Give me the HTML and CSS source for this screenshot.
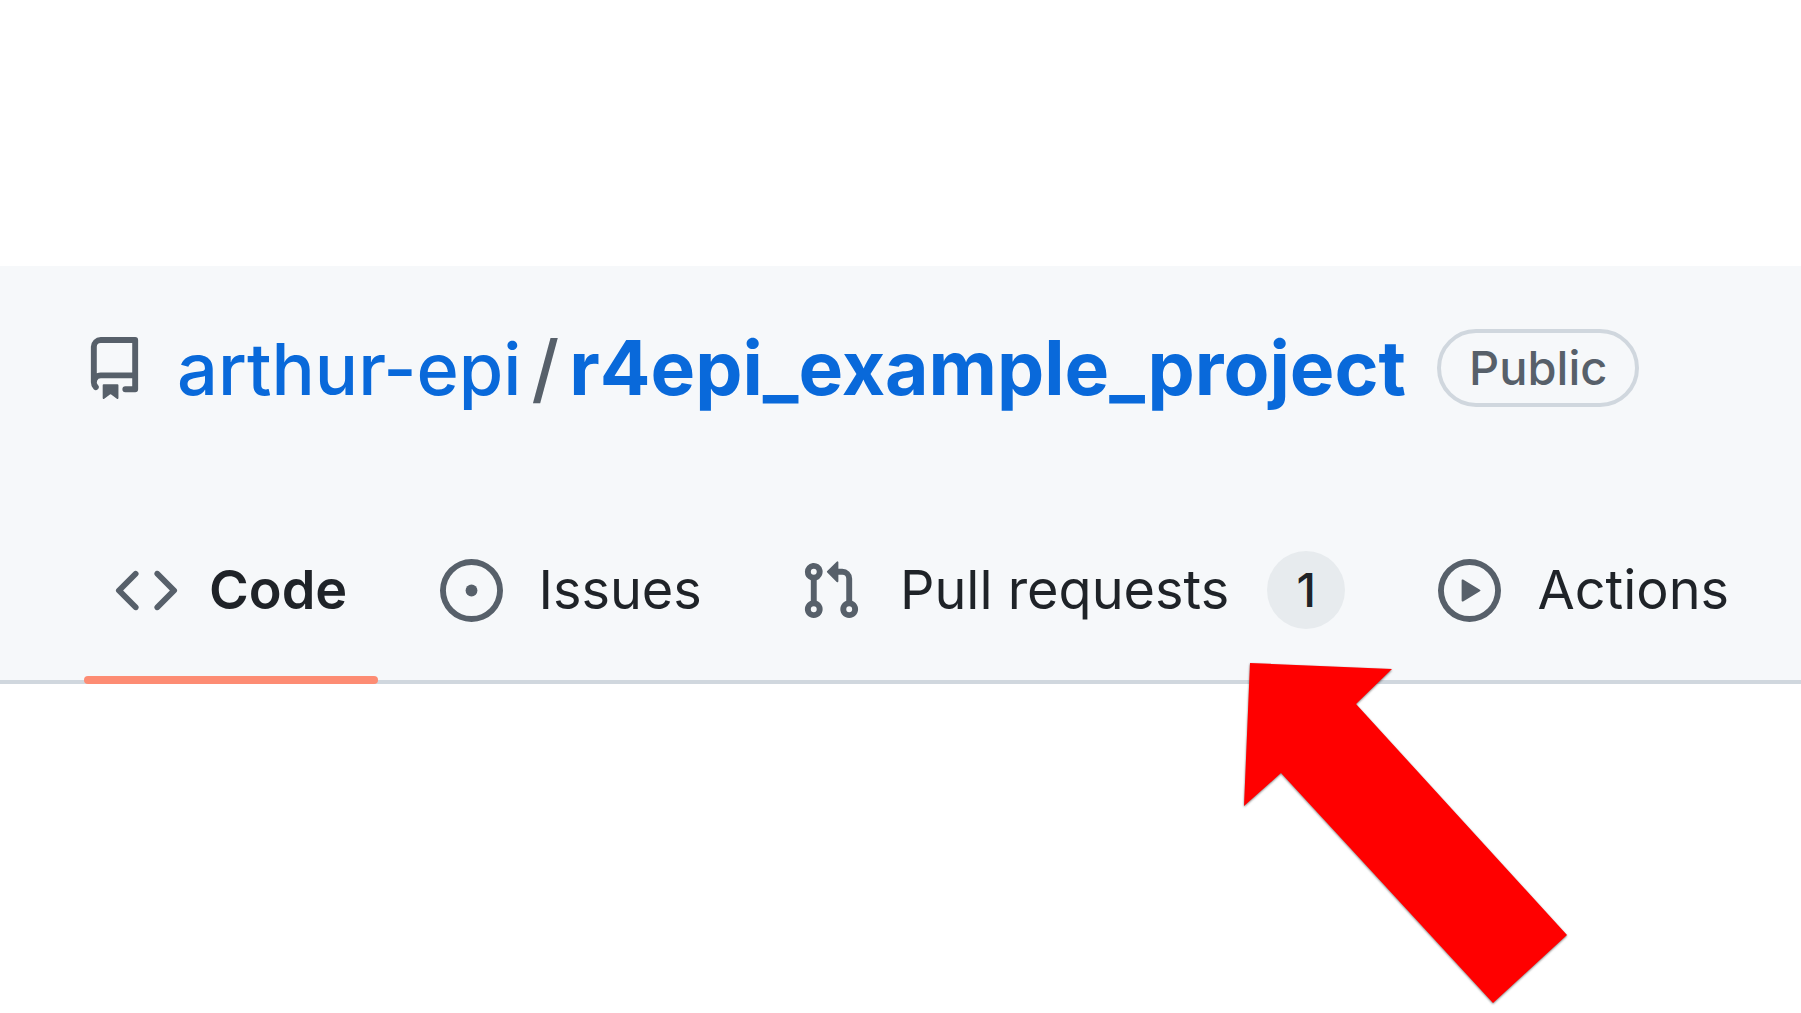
FILE: index.html
```html
<!DOCTYPE html>
<html lang="en">
<head>
<meta charset="utf-8">
<title>arthur-epi/r4epi_example_project</title>
<link rel="stylesheet" href="styles.css">
</head>
<body>
<header class="repo-header">
  <div class="repo-title">
    <svg class="icon" viewBox="0 0 16 16" aria-hidden="true"><path d="M2 2.5A2.5 2.5 0 0 1 4.500 0h8.750a.75.75 0 0 1 .75.75v12.500a.75.75 0 0 1-.75.75h-2.500a.75.75 0 0 1 0-1.500h1.750v-2h-8a1 1 0 0 0-.714 1.700.75.75 0 1 1-1.072 1.050A2.495 2.495 0 0 1 2 11.500Zm10.500-1h-8a1 1 0 0 0-1 1v6.708A2.486 2.486 0 0 1 4.500 9h8ZM5 12.250a.25.25 0 0 1 .25-.25h3.500a.25.25 0 0 1 .25.25v3.250a.25.25 0 0 1-.4.200l-1.450-1.087a.249.249 0 0 0-.300 0L5.400 15.700a.25.25 0 0 1-.4-.2Z"/></svg>
    <h1 class="repo-name"><a class="owner" href="#owner">arthur-epi</a><span class="slash">/</span><a class="project" href="#project">r4epi_example_project</a></h1>
    <span class="visibility">Public</span>
  </div>
  <nav class="tabs" aria-label="Repository">
    <a class="tab tab-current" href="#code" aria-current="page">
      <svg class="icon" viewBox="0 0 16 16" aria-hidden="true"><path d="m11.280 3.220 4.250 4.250a.75.75 0 0 1 0 1.060l-4.250 4.250a.749.749 0 0 1-1.275-.326.749.749 0 0 1 .215-.734L13.940 8l-3.720-3.720a.749.749 0 0 1 .326-1.275.749.749 0 0 1 .734.215Zm-6.560 0a.751.751 0 0 1 1.042.018.751.751 0 0 1 .018 1.042L2.060 8l3.720 3.720a.749.749 0 0 1-.326 1.275.749.749 0 0 1-.734-.215L.470 8.530a.75.75 0 0 1 0-1.060Z"/></svg>
      <span class="label" data-content="Code">Code</span>
    </a>
    <a class="tab" href="#issues">
      <svg class="icon" viewBox="0 0 16 16" aria-hidden="true"><path d="M8 9.500a1.500 1.500 0 1 0 0-3 1.500 1.500 0 0 0 0 3Z"/><path d="M8 0a8 8 0 1 1 0 16A8 8 0 0 1 8 0ZM1.500 8a6.500 6.500 0 1 0 13 0 6.500 6.500 0 0 0-13 0Z"/></svg>
      <span class="label" data-content="Issues">Issues</span>
    </a>
    <a class="tab" href="#pulls">
      <svg class="icon" viewBox="0 0 16 16" aria-hidden="true"><path d="M1.500 3.250a2.250 2.250 0 1 1 3 2.122v5.256a2.251 2.251 0 1 1-1.500 0V5.372A2.250 2.250 0 0 1 1.500 3.250Zm5.677-.177L9.573.677A.25.25 0 0 1 10 .854V2.500h1A2.500 2.500 0 0 1 13.500 5v5.628a2.251 2.251 0 1 1-1.500 0V5a1 1 0 0 0-1-1h-1v1.646a.25.25 0 0 1-.427.177L7.177 3.427a.25.25 0 0 1 0-.354ZM3.750 2.500a.75.75 0 1 0 0 1.500.75.75 0 0 0 0-1.500Zm0 9.500a.75.75 0 1 0 0 1.500.75.75 0 0 0 0-1.500Zm8.250.750a.75.75 0 1 0 1.500 0 .75.75 0 0 0-1.500 0Z"/></svg>
      <span class="label" data-content="Pull requests">Pull requests</span>
      <span class="counter">1</span>
    </a>
    <a class="tab" href="#actions">
      <svg class="icon" viewBox="0 0 16 16" aria-hidden="true"><path d="M8 0a8 8 0 1 1 0 16A8 8 0 0 1 8 0ZM1.500 8a6.500 6.500 0 1 0 13 0 6.500 6.500 0 0 0-13 0Zm4.879-2.773 4.264 2.559a.25.25 0 0 1 0 .428l-4.264 2.559A.25.25 0 0 1 6 10.559V5.442a.25.25 0 0 1 .379-.215Z"/></svg>
      <span class="label" data-content="Actions">Actions</span>
    </a>
  </nav>
</header>
<svg class="pointer" viewBox="0 0 326 342" aria-hidden="true"><path d="M7 1 149 7 113 42 324 273 250 341 38 111 1 144Z"/></svg>
</body>
</html>
```
FILE: styles.css
```css
* {
  box-sizing: border-box;
}

body {
  position: relative;
  min-height: 100vh;
  margin: 0;
  padding-top: 266px;
  background: #fff;
  color: #1f2328;
  font-family: Inter, "Liberation Sans", sans-serif;
}

a {
  color: inherit;
  text-decoration: none;
}

.repo-header {
  background: #f6f8fa;
  border-bottom: 4px solid #d0d7de;
  padding-top: 54px;
}

.repo-title {
  display: flex;
  align-items: center;
  height: 96px;
  padding-left: 83px;
  gap: 31px;
}

.icon {
  flex: none;
  width: 63px;
  height: 63px;
  fill: #57606a;
}

.repo-name {
  margin: 0;
  font-size: 75px;
  line-height: 92px;
  font-weight: 500;
  white-space: nowrap;
}

.owner,
.project {
  color: #0969da;
}

.owner {
  font-size: 72px;
}

.project {
  font-weight: 700;
}

.slash {
  margin: 0 10px;
  color: #57606a;
}

.visibility {
  border: 4px solid #d0d7de;
  border-radius: 40px;
  padding: 0 28px;
  color: #57606a;
  font-size: 47px;
  line-height: 70px;
  font-weight: 500;
}

.tabs {
  display: flex;
  gap: 31px;
  margin-top: 80px;
  padding-left: 84px;
}

.tab {
  display: flex;
  align-items: center;
  gap: 31px;
  height: 188px;
  margin-bottom: -4px;
  padding: 0 31px;
  font-size: 54px;
  line-height: 80px;
  white-space: nowrap;
}

.tab-current {
  position: relative;
  font-weight: 600;
}

.tab-current::after {
  content: "";
  position: absolute;
  right: 0;
  bottom: 0;
  left: 0;
  height: 8px;
  border-radius: 4px;
  background: #fd8c73;
}

.label {
  text-align: center;
}

.label::after {
  content: attr(data-content);
  display: block;
  height: 0;
  overflow: hidden;
  visibility: hidden;
  font-weight: 700;
}

.tab-current .label::after {
  font-weight: 600;
}

.counter {
  min-width: 78px;
  border-radius: 39px;
  background: #e7ebee;
  font-size: 47px;
  line-height: 78px;
  font-weight: 500;
  text-align: center;
}

.pointer {
  position: absolute;
  top: 662px;
  left: 1243px;
  width: 326px;
  height: 342px;
  overflow: visible;
  fill: #f00;
  filter: drop-shadow(0 1px 1px rgba(0, 0, 0, 0.5));
}
```
